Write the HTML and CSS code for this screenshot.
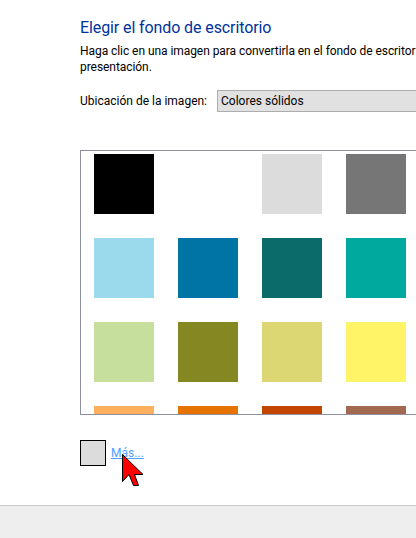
FILE: index.html
```html
<!DOCTYPE html>
<html lang="es">
<head>
<meta charset="utf-8">
<title>Elegir el fondo de escritorio</title>
<link rel="stylesheet" href="styles.css">
</head>
<body>
<main class="content">
  <h1 class="title">Elegir el fondo de escritorio</h1>
  <p class="desc">Haga clic en una imagen para convertirla en el fondo de escritorio o seleccione más de una imagen para crear una<br>presentación.</p>
  <div class="location">
    <span class="location-label">Ubicación de la imagen:</span>
    <div class="select">Colores sólidos</div>
  </div>
  <div class="frame">
    <div class="grid">
      <div class="sw c1"></div><div class="sw c2"></div><div class="sw c3"></div><div class="sw c4"></div>
      <div class="sw c5"></div><div class="sw c6"></div><div class="sw c7"></div><div class="sw c8"></div>
      <div class="sw c9"></div><div class="sw c10"></div><div class="sw c11"></div><div class="sw c12"></div>
      <div class="sw c13"></div><div class="sw c14"></div><div class="sw c15"></div><div class="sw c16"></div>
    </div>
  </div>
  <div class="current">
    <div class="preview"></div>
    <a class="more" href="#">Más...</a>
    <svg class="cursor" width="24" height="36" viewBox="0 0 24 36" aria-hidden="true">
      <path d="M0.5 0.5V27.5L7 20.5L11.5 31.5H16.5L12.5 20.5H21Z" fill="#f00" stroke="#000" stroke-width="1"/>
    </svg>
  </div>
</main>
<footer class="footer"></footer>
</body>
</html>
```
FILE: styles.css
```css
html, body {
  margin: 0;
  padding: 0;
  height: 538px;
  overflow: hidden;
  background: #fff;
}
body {
  display: flex;
  flex-direction: column;
  width: 416px;
  font-family: Roboto, sans-serif;
  color: #000;
}
.content {
  flex: 1;
  padding: 18px 0 0 80px;
  min-width: 0;
}
.title {
  margin: 0;
  font-size: 16px;
  line-height: 20px;
  font-weight: 400;
  letter-spacing: -0.1px;
  color: #003399;
  white-space: nowrap;
}
.desc {
  margin: 5px 0 0;
  width: 700px;
  font-size: 12px;
  line-height: 16px;
  letter-spacing: -0.06px;
  white-space: nowrap;
}
.location {
  display: flex;
  align-items: center;
  gap: 10px;
  margin-top: 15px;
  width: 500px;
}
.location-label {
  font-size: 12px;
  white-space: nowrap;
}
.select {
  width: 300px;
  height: 22px;
  box-sizing: border-box;
  padding-left: 3px;
  border: 1px solid #adadad;
  background: #e1e1e1;
  font-size: 12px;
  line-height: 20px;
}
.frame {
  margin-top: 38px;
  width: 500px;
  height: 265px;
  box-sizing: border-box;
  border: 1px solid #8e8f9f;
  overflow: hidden;
}
.grid {
  display: grid;
  grid-template-columns: repeat(4, 60px);
  grid-auto-rows: 60px;
  gap: 24px;
  padding: 3px 0 0 13px;
}
.c1 { background: #000; }
.c2 { background: #fff; }
.c3 { background: #dcdcdc; }
.c4 { background: #767676; }
.c5 { background: #9bd9ec; }
.c6 { background: #0074a5; }
.c7 { background: #0b6b6b; }
.c8 { background: #00a99d; }
.c9 { background: #c7df9c; }
.c10 { background: #858723; }
.c11 { background: #dcd673; }
.c12 { background: #fff467; }
.c13 { background: #fdb05e; }
.c14 { background: #e67300; }
.c15 { background: #c34600; }
.c16 { background: #a1694f; }
.current {
  position: relative;
  display: flex;
  align-items: center;
  gap: 5px;
  margin-top: 25px;
}
.preview {
  width: 26px;
  height: 26px;
  box-sizing: border-box;
  border: 1px solid #000;
  background: #dcdcdc;
}
.more {
  font-size: 12px;
  color: #4d9fff;
}
.cursor {
  position: absolute;
  left: 42px;
  top: 14px;
}
.footer {
  height: 33px;
  box-sizing: border-box;
  border-top: 1px solid #c9c9c9;
  background: #eeeeee;
  flex: none;
}
```
